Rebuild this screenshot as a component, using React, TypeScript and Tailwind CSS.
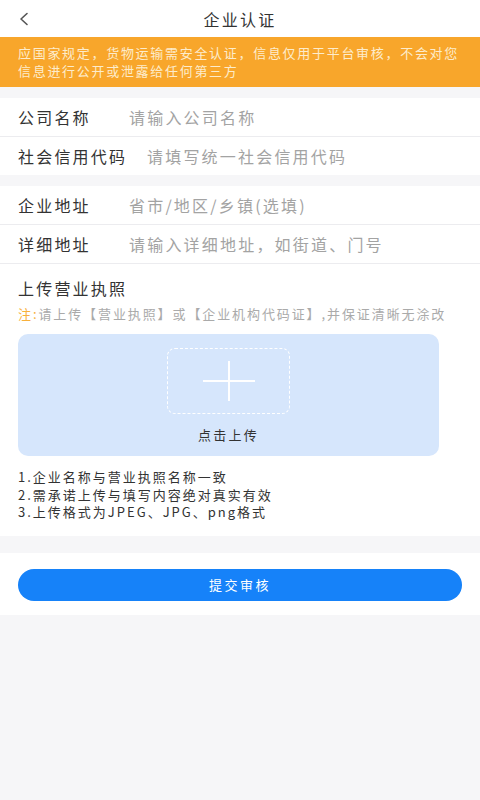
import React from "react";

const font = { fontFamily: '"Noto Sans CJK SC", "Noto Sans", sans-serif' };

function Row({ label, placeholder, border = true, labelW = "w-[111px]", h = "h-[39px]" }: { label: string; placeholder: string; border?: boolean; labelW?: string; h?: string }) {
  return (
    <div className={`flex items-center ${h} pl-[18px] ${border ? "border-b border-[#ececef]" : ""}`}>
      <span className={`${labelW} shrink-0 text-[16px] tracking-[2.2px] text-[#333]`}>{label}</span>
      <span className="text-[16px] tracking-[2.2px] text-[#a3a3a3]">{placeholder}</span>
    </div>
  );
}

export default function App() {
  return (
    <div style={font} className="w-[480px] min-h-[800px] bg-[#f6f6f8] flex flex-col">
      {/* header */}
      <div className="h-[37px] bg-white relative flex items-center justify-center">
        <svg className="absolute left-[18px] top-[12px]" width="12" height="14" viewBox="0 0 12 14">
          <path d="M9 1.5 L3 7 L9 12.5" fill="none" stroke="#555" strokeWidth="1.6" strokeLinecap="round" strokeLinejoin="round" />
        </svg>
        <span className="text-[16px] tracking-[2.2px] text-[#333]">企业认证</span>
      </div>
      {/* banner */}
      <div className="h-[50px] bg-[#f8a62b] pl-[18px] pr-[10px] pt-[7px] text-[13px] leading-[18px] tracking-[1.7px] text-[#fdeccb]">
        应国家规定，货物运输需安全认证，信息仅用于平台审核，不会对您信息进行公开或泄露给任何第三方
      </div>
      <div className="h-[11px]" />
      <div className="bg-white">
        <Row label="公司名称" placeholder="请输入公司名称" />
        <Row label="社会信用代码" placeholder="请填写统一社会信用代码" border={false} labelW="w-[129px]" h="h-[38px]" />
      </div>
      <div className="h-[11px]" />
      <div className="bg-white">
        <Row label="企业地址" placeholder="省市/地区/乡镇(选填)" />
        <Row label="详细地址" placeholder="请输入详细地址，如街道、门号" />
        <div className="px-[18px] pt-[12px] pb-[15px]">
          <div className="text-[16px] tracking-[2.2px] text-[#333] leading-[24px]">上传营业执照</div>
          <div className="mt-[2px] text-[13px] tracking-[1.9px] leading-[24px] text-[#aaa] whitespace-nowrap">
            <span className="text-[#f8b03c]">注:</span>请上传【营业执照】或【企业机构代码证】,并保证清晰无涂改
          </div>
          <div className="mt-[8px] w-[421px] h-[122px] rounded-[10px] bg-[#d6e6fc] flex flex-col items-center pt-[14px]">
            <div className="w-[123px] h-[66px] rounded-[8px] border border-dashed border-white flex items-center justify-center">
              <svg width="54" height="40" viewBox="0 0 54 40">
                <path d="M1 20 H53 M27 0 V40" stroke="white" strokeWidth="2" />
              </svg>
            </div>
            <div className="mt-[12px] text-[13px] tracking-[2.3px] text-[#333] leading-[18px]">点击上传</div>
          </div>
          <div className="mt-[12px] text-[13px] tracking-[2px] leading-[17.5px] text-[#333]">
            <div>1.企业名称与营业执照名称一致</div>
            <div>2.需承诺上传与填写内容绝对真实有效</div>
            <div>3.上传格式为JPEG、JPG、png格式</div>
          </div>
        </div>
      </div>
      <div className="h-[17px]" />
      <div className="bg-white pt-[16px] pb-[14px] px-[18px]">
        <div className="h-[32px] w-[444px] rounded-full bg-[#1682f9] flex items-center justify-center text-white text-[13px] tracking-[2.5px]">
          提交审核
        </div>
      </div>
    </div>
  );
}
